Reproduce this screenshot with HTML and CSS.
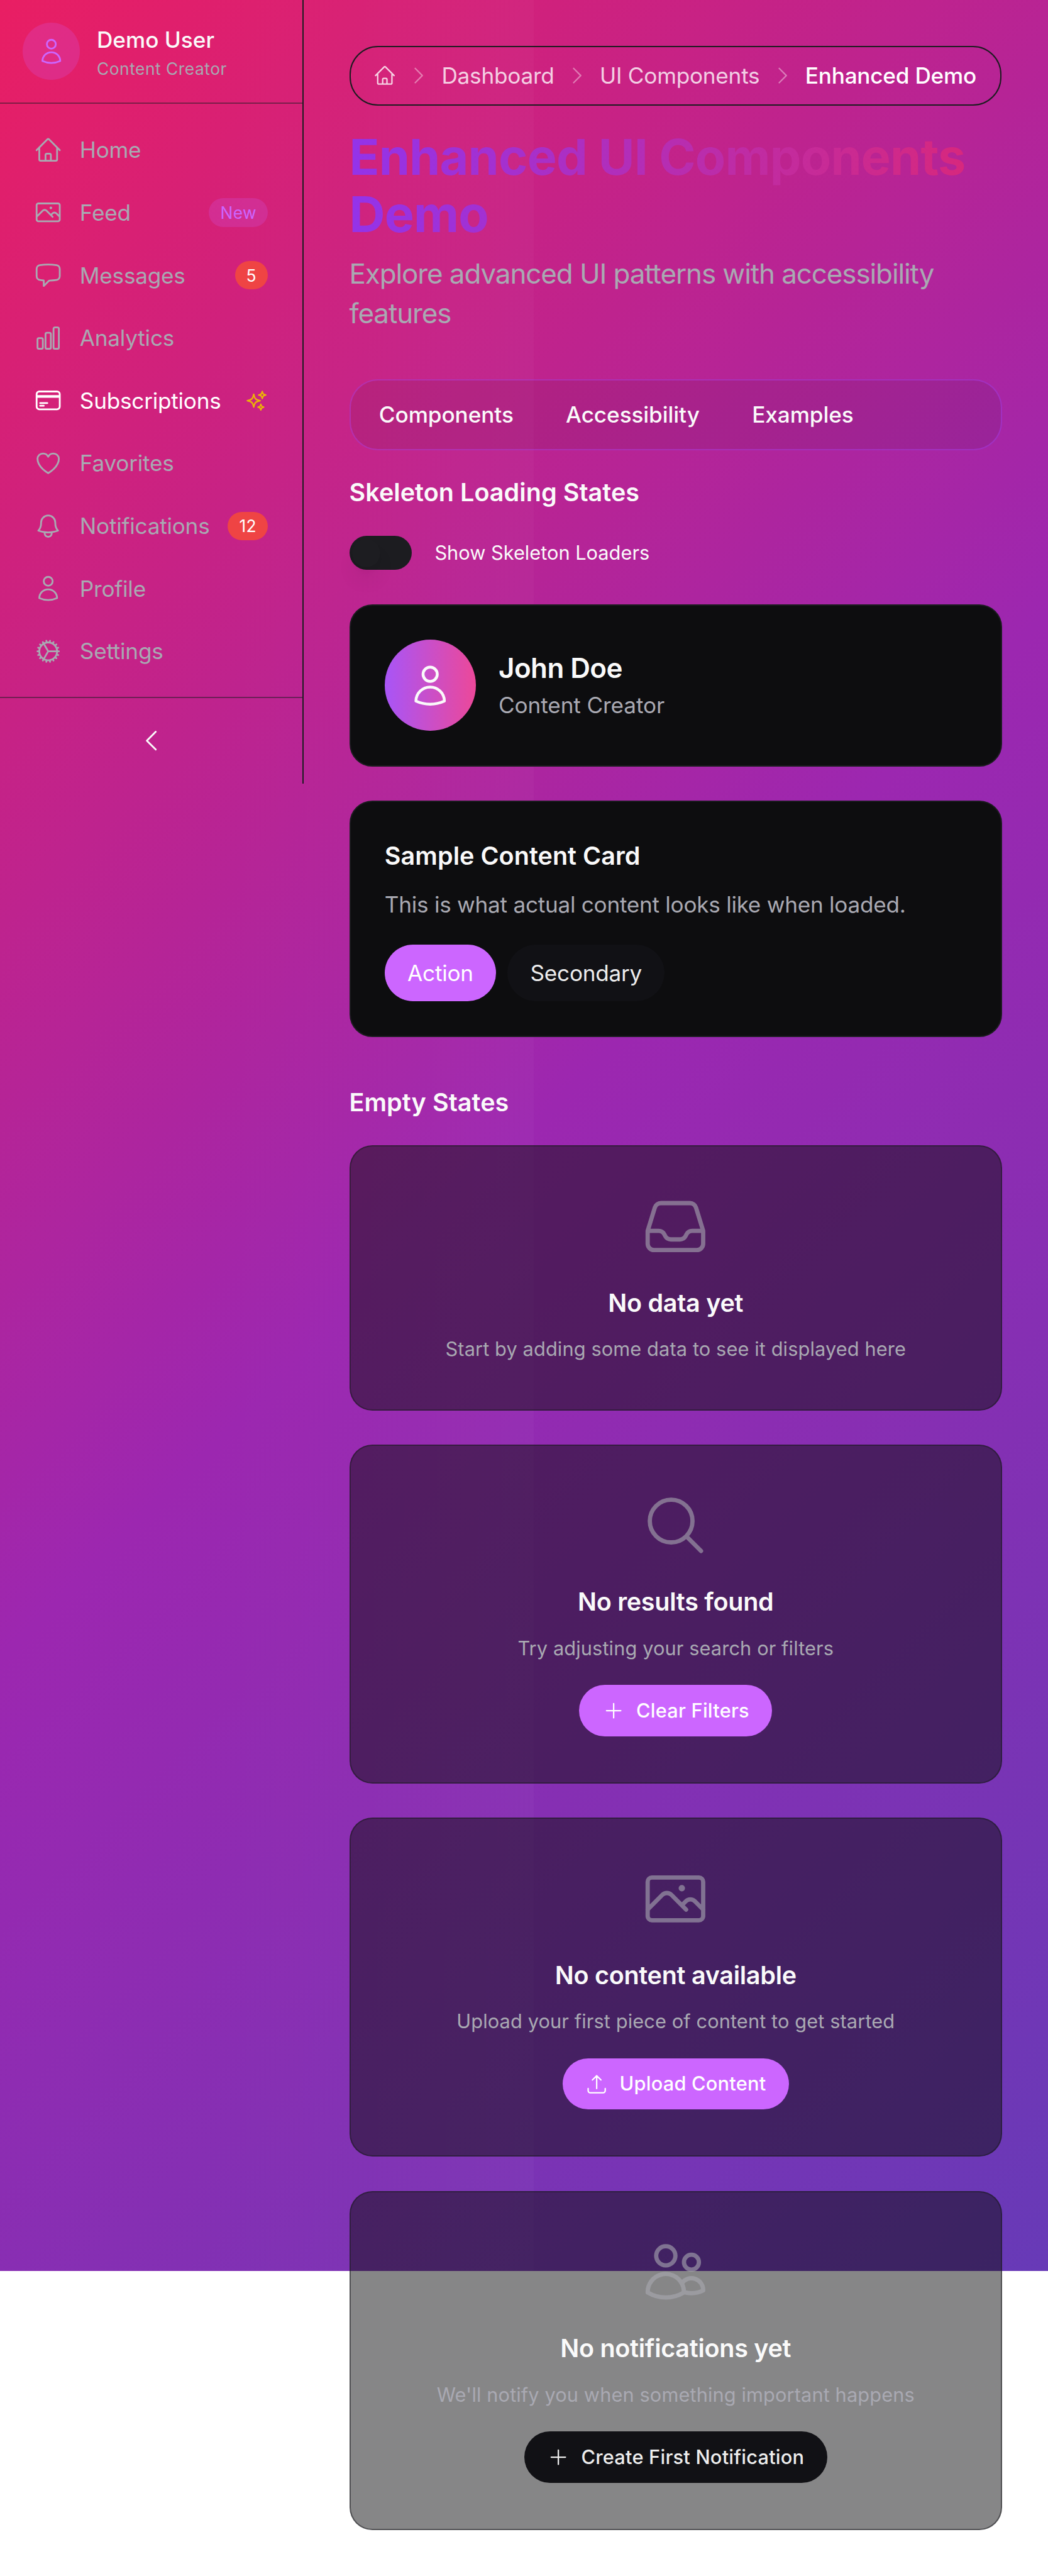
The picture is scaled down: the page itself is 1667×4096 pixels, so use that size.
FILE: index.html
```html
<!DOCTYPE html>
<html lang="en">
<head>
<meta charset="utf-8">
<title>Enhanced UI Components Demo</title>
<link rel="stylesheet" href="styles.css">
</head>
<body>
<svg class="sprite" aria-hidden="true">
  <symbol id="home" viewBox="0 0 24 24"><path d="m2.25 12 8.954-8.955c.44-.439 1.152-.439 1.591 0L21.75 12M4.5 9.75v10.125c0 .621.504 1.125 1.125 1.125H9.75v-4.875c0-.621.504-1.125 1.125-1.125h2.25c.621 0 1.125.504 1.125 1.125V21h4.125c.621 0 1.125-.504 1.125-1.125V9.75M8.25 21h8.25"/></symbol>
  <symbol id="photo" viewBox="0 0 24 24"><path d="m2.25 15.75 5.159-5.159a2.25 2.25 0 0 1 3.182 0l5.159 5.159m-1.5-1.5 1.409-1.409a2.25 2.25 0 0 1 3.182 0l2.909 2.909m-18 3.75h16.5a1.5 1.5 0 0 0 1.5-1.5V6a1.5 1.5 0 0 0-1.5-1.5H3.75A1.5 1.5 0 0 0 2.25 6v12a1.5 1.5 0 0 0 1.5 1.5Zm10.5-11.25h.008v.008h-.008V8.25Zm.375 0a.375.375 0 1 1-.75 0 .375.375 0 0 1 .75 0Z"/></symbol>
  <symbol id="chat" viewBox="0 0 24 24"><path d="M2.25 12.76c0 1.6 1.123 2.994 2.707 3.227 1.087.16 2.185.283 3.293.369V21l4.076-4.076a1.526 1.526 0 0 1 1.037-.443 48.282 48.282 0 0 0 5.68-.494c1.584-.233 2.707-1.626 2.707-3.228V6.741c0-1.602-1.123-2.995-2.707-3.228A48.394 48.394 0 0 0 12 3c-2.392 0-4.744.175-7.043.513C3.373 3.746 2.25 5.14 2.25 6.741v6.018Z"/></symbol>
  <symbol id="chart" viewBox="0 0 24 24"><path d="M3 13.125C3 12.504 3.504 12 4.125 12h2.25c.621 0 1.125.504 1.125 1.125v6.75C7.5 20.496 6.996 21 6.375 21h-2.25A1.125 1.125 0 0 1 3 19.875v-6.75ZM9.75 8.625c0-.621.504-1.125 1.125-1.125h2.25c.621 0 1.125.504 1.125 1.125v11.25c0 .621-.504 1.125-1.125 1.125h-2.25a1.125 1.125 0 0 1-1.125-1.125V8.625ZM16.5 4.125c0-.621.504-1.125 1.125-1.125h2.25C20.496 3 21 3.504 21 4.125v15.75c0 .621-.504 1.125-1.125 1.125h-2.25a1.125 1.125 0 0 1-1.125-1.125V4.125Z"/></symbol>
  <symbol id="card" viewBox="0 0 24 24"><path d="M2.25 8.25h19.5M2.25 9h19.5m-16.5 5.25h6m-6 2.25h3m-3.75 3h15a2.25 2.25 0 0 0 2.25-2.25V6.75A2.25 2.25 0 0 0 19.5 4.5h-15a2.25 2.25 0 0 0-2.25 2.25v10.5A2.25 2.25 0 0 0 4.5 19.5Z"/></symbol>
  <symbol id="sparkles" viewBox="0 0 24 24"><path d="M9.813 15.904 9 18.75l-.813-2.846a4.5 4.5 0 0 0-3.09-3.09L2.25 12l2.846-.813a4.5 4.5 0 0 0 3.09-3.09L9 5.25l.813 2.846a4.5 4.5 0 0 0 3.09 3.09L15.75 12l-2.846.813a4.5 4.5 0 0 0-3.09 3.09ZM18.259 8.715 18 9.75l-.259-1.035a3.375 3.375 0 0 0-2.455-2.456L14.25 6l1.036-.259a3.375 3.375 0 0 0 2.455-2.456L18 2.25l.259 1.035a3.375 3.375 0 0 0 2.456 2.456L21.75 6l-1.035.259a3.375 3.375 0 0 0-2.456 2.456ZM16.894 20.567 16.5 21.75l-.394-1.183a2.25 2.25 0 0 0-1.423-1.423L13.5 18.75l1.183-.394a2.25 2.25 0 0 0 1.423-1.423l.394-1.183.394 1.183a2.25 2.25 0 0 0 1.423 1.423l1.183.394-1.183.394a2.25 2.25 0 0 0-1.423 1.423Z"/></symbol>
  <symbol id="heart" viewBox="0 0 24 24"><path d="M21 8.25c0-2.485-2.099-4.5-4.688-4.5-1.935 0-3.597 1.126-4.312 2.733-.715-1.607-2.377-2.733-4.313-2.733C5.1 3.75 3 5.765 3 8.25c0 7.22 9 12 9 12s9-4.78 9-12Z"/></symbol>
  <symbol id="bell" viewBox="0 0 24 24"><path d="M14.857 17.082a23.848 23.848 0 0 0 5.454-1.31A8.967 8.967 0 0 1 18 9.75V9A6 6 0 0 0 6 9v.75a8.967 8.967 0 0 1-2.312 6.022c1.733.64 3.56 1.085 5.455 1.31m5.714 0a24.255 24.255 0 0 1-5.714 0m5.714 0a3 3 0 1 1-5.714 0"/></symbol>
  <symbol id="user" viewBox="0 0 24 24"><path d="M15.75 6a3.75 3.75 0 1 1-7.5 0 3.75 3.75 0 0 1 7.5 0ZM4.501 20.118a7.5 7.5 0 0 1 14.998 0A17.933 17.933 0 0 1 12 21.75c-2.676 0-5.216-.584-7.499-1.632Z"/></symbol>
  <symbol id="cog" viewBox="0 0 24 24"><path d="M4.5 12a7.5 7.5 0 0 0 15 0m-15 0a7.5 7.5 0 1 1 15 0m-15 0H3m16.5 0H21m-1.5 0H12m-8.457 3.077 1.41-.513m14.095-5.13 1.41-.513M5.106 17.785l1.15-.964m11.49-9.642 1.149-.964M7.501 19.795l.75-1.3m7.5-12.99.75-1.3m-6.063 16.658.26-1.477m2.605-14.772.26-1.477m0 17.726-.26-1.477M10.698 4.614l-.26-1.477M16.5 19.794l-.75-1.299M7.5 4.205 12 12m6.894 5.785-1.149-.964M6.256 7.178l-1.15-.964m15.352 8.864-1.41-.513M4.954 9.435l-1.41-.514M12.002 12l-3.75 6.495"/></symbol>
  <symbol id="left" viewBox="0 0 24 24"><path d="M15.75 19.5 8.25 12l7.5-7.5"/></symbol>
  <symbol id="right" viewBox="0 0 24 24"><path d="m8.25 4.5 7.5 7.5-7.5 7.5"/></symbol>
  <symbol id="inbox" viewBox="0 0 24 24"><path d="M2.25 13.5h3.86a2.25 2.25 0 0 1 2.012 1.244l.256.512a2.25 2.25 0 0 0 2.013 1.244h3.218a2.25 2.25 0 0 0 2.013-1.244l.256-.512a2.25 2.25 0 0 1 2.013-1.244h3.859m-19.5.338V18a2.25 2.25 0 0 0 2.25 2.25h15A2.25 2.25 0 0 0 21.75 18v-4.162c0-.224-.034-.447-.1-.661L19.24 5.338a2.25 2.25 0 0 0-2.15-1.588H6.911a2.25 2.25 0 0 0-2.15 1.588L2.35 13.177a2.25 2.25 0 0 0-.1.661Z"/></symbol>
  <symbol id="search" viewBox="0 0 24 24"><path d="m21 21-5.197-5.197m0 0A7.5 7.5 0 1 0 5.196 5.196a7.5 7.5 0 0 0 10.607 10.607Z"/></symbol>
  <symbol id="plus" viewBox="0 0 24 24"><path d="M12 4.5v15m7.5-7.5h-15"/></symbol>
  <symbol id="upload" viewBox="0 0 24 24"><path d="M3 16.5v2.25A2.25 2.25 0 0 0 5.25 21h13.5A2.25 2.25 0 0 0 21 18.75V16.5m-13.5-9L12 3m0 0 4.5 4.5M12 3v13.5"/></symbol>
  <symbol id="users" viewBox="0 0 24 24"><path d="M15 19.128a9.38 9.38 0 0 0 2.625.372 9.337 9.337 0 0 0 4.121-.952 4.125 4.125 0 0 0-7.533-2.493M15 19.128v-.003c0-1.113-.285-2.16-.786-3.07M15 19.128v.106A12.318 12.318 0 0 1 8.624 21c-2.331 0-4.512-.645-6.374-1.766l-.001-.109a6.375 6.375 0 0 1 11.964-3.07M12 6.375a3.375 3.375 0 1 1-6.75 0 3.375 3.375 0 0 1 6.75 0Zm8.25 2.25a2.625 2.625 0 1 1-5.25 0 2.625 2.625 0 0 1 5.25 0Z"/></symbol>
</svg>
<div class="page">
  <aside class="sidebar">
    <div class="account">
      <span class="account-avatar"><svg class="icon icon-md"><use href="#user"/></svg></span>
      <div>
        <p class="account-name">Demo User</p>
        <p class="account-role">Content Creator</p>
      </div>
    </div>
    <nav class="menu">
      <a class="menu-item"><svg class="icon"><use href="#home"/></svg><span>Home</span></a>
      <a class="menu-item"><svg class="icon"><use href="#photo"/></svg><span>Feed</span><em class="pill pill-new">New</em></a>
      <a class="menu-item"><svg class="icon"><use href="#chat"/></svg><span>Messages</span><em class="pill">5</em></a>
      <a class="menu-item"><svg class="icon"><use href="#chart"/></svg><span>Analytics</span></a>
      <a class="menu-item current"><svg class="icon"><use href="#card"/></svg><span>Subscriptions</span><svg class="icon icon-sm sparkle"><use href="#sparkles"/></svg></a>
      <a class="menu-item"><svg class="icon"><use href="#heart"/></svg><span>Favorites</span></a>
      <a class="menu-item"><svg class="icon"><use href="#bell"/></svg><span>Notifications</span><em class="pill">12</em></a>
      <a class="menu-item"><svg class="icon"><use href="#user"/></svg><span>Profile</span></a>
      <a class="menu-item"><svg class="icon"><use href="#cog"/></svg><span>Settings</span></a>
    </nav>
    <div class="collapse"><svg class="icon"><use href="#left"/></svg></div>
  </aside>
  <main class="main">
    <nav class="crumbs">
      <svg class="icon icon-sm"><use href="#home"/></svg>
      <svg class="icon icon-sm sep"><use href="#right"/></svg>
      <span>Dashboard</span>
      <svg class="icon icon-sm sep"><use href="#right"/></svg>
      <span>UI Components</span>
      <svg class="icon icon-sm sep"><use href="#right"/></svg>
      <span class="here">Enhanced Demo</span>
    </nav>
    <h1 class="title">Enhanced UI Components Demo</h1>
    <p class="lead">Explore advanced UI patterns with accessibility<br>features</p>
    <div class="tabs"><span>Components</span><span>Accessibility</span><span>Examples</span></div>

    <h2 class="heading">Skeleton Loading States</h2>
    <div class="switch-row"><span class="switch"><i class="knob"></i></span><span class="switch-label">Show Skeleton Loaders</span></div>
    <section class="card profile">
      <span class="avatar"><svg class="icon icon-lg"><use href="#user"/></svg></span>
      <div><h3 class="profile-name">John Doe</h3><p class="profile-role">Content Creator</p></div>
    </section>
    <section class="card sample">
      <h3 class="sample-title">Sample Content Card</h3>
      <p class="sample-text">This is what actual content looks like when loaded.</p>
      <div class="actions"><button class="button">Action</button><button class="button secondary">Secondary</button></div>
    </section>

    <h2 class="heading heading-empty">Empty States</h2>
    <section class="card empty">
      <svg class="icon icon-xl"><use href="#inbox"/></svg>
      <h3 class="empty-title">No data yet</h3>
      <p class="empty-text">Start by adding some data to see it displayed here</p>
    </section>
    <section class="card empty">
      <svg class="icon icon-xl"><use href="#search"/></svg>
      <h3 class="empty-title">No results found</h3>
      <p class="empty-text">Try adjusting your search or filters</p>
      <button class="button small"><svg class="icon icon-sm"><use href="#plus"/></svg><span>Clear Filters</span></button>
    </section>
    <section class="card empty">
      <svg class="icon icon-xl"><use href="#photo"/></svg>
      <h3 class="empty-title">No content available</h3>
      <p class="empty-text">Upload your first piece of content to get started</p>
      <button class="button small"><svg class="icon icon-sm"><use href="#upload"/></svg><span>Upload Content</span></button>
    </section>
    <section class="card empty">
      <svg class="icon icon-xl"><use href="#users"/></svg>
      <h3 class="empty-title">No notifications yet</h3>
      <p class="empty-text">We'll notify you when something important happens</p>
      <button class="button small secondary"><svg class="icon icon-sm"><use href="#plus"/></svg><span>Create First Notification</span></button>
    </section>
  </main>
</div>
</body>
</html>
```
FILE: styles.css
```css
:root {
  --ink: #0d0d0f;
  --line: #1c1c20;
  --muted: #a9a9b2;
  --accent: #cc66ff;
}
* { box-sizing: border-box; margin: 0; padding: 0; }
html { font-size: 36.239px; background: #fff; }
body { font-family: Inter, "Liberation Sans", sans-serif; font-size: .97rem; line-height: 1.5rem; letter-spacing: -.0065em; color: #fafafa; }
.sprite { position: absolute; width: 0; height: 0; }
.page {
  display: flex;
  align-items: flex-start;
  height: 4096px;
  background:
    linear-gradient(to right, rgba(255, 255, 255, 0) 40%, rgba(255, 255, 255, .025)) 0 0 / 849px 3611px no-repeat,
    linear-gradient(135deg, #e91e63 0%, #9c27b0 50%, #673ab7 100%) 0 0 / 100% 3611px no-repeat;
}
.icon { width: 1.25rem; height: 1.25rem; flex: none; display: block; fill: none; stroke: currentColor; stroke-width: 1.5; stroke-linecap: round; stroke-linejoin: round; }
.icon-sm { width: 1rem; height: 1rem; }
.icon-md { width: 1.25rem; height: 1.25rem; }
.icon-lg { width: 2rem; height: 2rem; }
.icon-xl { width: 3rem; height: 3rem; }

.sidebar { width: 482.5px; height: 1245.5px; flex: none; display: flex; flex-direction: column; border-right: 2px solid var(--line); }
.account { display: flex; align-items: center; gap: .75rem; padding: 1rem; border-bottom: 2px solid rgba(28, 28, 32, .5); height: 4.56rem; flex: none; }
.account-avatar { width: 2.5rem; height: 2.5rem; border-radius: 50%; display: grid; place-items: center; background: rgba(204, 102, 255, .2); color: var(--accent); }
.account-name { font-weight: 500; line-height: 1.5rem; letter-spacing: 0; }
.account-role { font-size: .728rem; line-height: 1rem; letter-spacing: .019em; color: var(--muted); }
.menu { flex: 1; padding: .77rem .5rem .73rem; display: flex; flex-direction: column; gap: .25rem; }
.menu-item { display: flex; align-items: center; gap: .75rem; height: 2.5rem; padding: 0 1rem; color: var(--muted); }
.menu-item.current { color: #fff; }
.pill { margin-left: auto; font-style: normal; font-size: .728rem; line-height: 1rem; letter-spacing: .015em; padding: .125rem .5rem; border-radius: 99px; background: #ef4444; color: #fff; }
.pill-new { background: rgba(204, 102, 255, .2); color: var(--accent); }
.sparkle { margin-left: auto; color: #eab308; }
.collapse { display: flex; align-items: center; justify-content: center; height: 3.79rem; flex: none; border-top: 2px solid rgba(28, 28, 32, .5); }

.main { width: 1038.5px; margin: 73px 0 0 73px; }
.crumbs { display: flex; align-items: center; gap: .5rem; width: 1037px; height: 2.625rem; padding: 0 1rem; border: 2px solid var(--line); border-radius: 1.25rem; color: rgba(255, 255, 255, .8); white-space: nowrap; }
.crumbs .sep { color: rgba(255, 255, 255, .4); }
.crumbs .here { color: #fff; font-weight: 500; }
.title { margin-top: 1rem; font-size: 2.18rem; line-height: 2.5rem; font-weight: 700; letter-spacing: -.01em; color: transparent; background: linear-gradient(to right, #9333ea, #db2777); -webkit-background-clip: text; background-clip: text; }
.lead { margin-top: .5rem; font-size: 1.2125rem; line-height: 1.75rem; letter-spacing: -.0246em; color: var(--muted); }
.tabs { display: flex; gap: .3rem; margin-top: 2rem; height: 3.125rem; padding: .25rem; border: 2px solid rgba(150, 70, 240, .36); border-radius: 1.25rem; background: rgba(13, 13, 15, .08); background-clip: padding-box; font-weight: 500; letter-spacing: -.002em; }
.tabs span { padding: .5rem 1rem; }
.heading { margin-top: 1rem; font-size: 1.091rem; line-height: 1.75rem; font-weight: 600; letter-spacing: .001em; }
.switch-row { display: flex; align-items: center; gap: 1rem; height: 1.5rem; margin-top: 1rem; }
.switch { width: 2.75rem; height: 1.5rem; padding: .125rem; border-radius: 1rem; background: var(--line); }
.knob { display: block; width: 1.25rem; height: 1.25rem; border-radius: 50%; background: #1d1d21; box-shadow: 0 .625rem .94rem -.19rem rgba(0, 0, 0, .1), 0 .25rem .375rem -.25rem rgba(0, 0, 0, .1); }
.switch-label { font-size: .849rem; letter-spacing: 0; }

.card { margin-top: 1.5rem; padding: 1.5rem; border: 2px solid var(--line); border-radius: 1rem; background: var(--ink); }
.profile { display: flex; align-items: center; gap: 1rem; height: 7.125rem; }
.avatar { width: 4rem; height: 4rem; border-radius: 50%; display: grid; place-items: center; background: linear-gradient(to right, #a855f7, #ec4899); }
.profile-name { font-size: 1.2125rem; line-height: 1.75rem; font-weight: 600; letter-spacing: -.013em; }
.profile-role, .sample-text { color: var(--muted); }
.profile-role { letter-spacing: -.003em; }
.sample { height: 10.375rem; }
.sample-title { font-size: 1.091rem; line-height: 1.75rem; font-weight: 600; letter-spacing: .001em; }
.sample-text { margin-top: .5rem; letter-spacing: -.0075em; white-space: nowrap; }
.actions { display: flex; gap: .5rem; margin-top: 1rem; }
.button { display: inline-flex; align-items: center; justify-content: center; gap: .5rem; height: 2.5rem; padding: 0 1rem; border: 0; border-radius: 1.25rem; background: var(--accent); color: #fff; font: inherit; letter-spacing: inherit; white-space: nowrap; }
.button.small { height: 2.25rem; margin-top: 1rem; font-size: .849rem; font-weight: 500; letter-spacing: .007em; }
.button.secondary { background: #111115; color: #ededed; }

.heading-empty { margin-top: 2rem; }
.heading-empty + .card { margin-top: 1rem; }
.empty { display: flex; flex-direction: column; align-items: center; height: 14.875rem; padding: 2rem; text-align: center; background: rgba(13, 13, 15, .5); border-color: rgba(28, 28, 32, .5); }
.heading-empty + .empty { height: 11.625rem; }
.empty > .icon-xl { color: var(--muted); opacity: .6; }
.empty-title { margin-top: 1rem; font-size: 1.091rem; line-height: 1.75rem; font-weight: 600; letter-spacing: -.007em; }
.empty-text { margin-top: .5rem; font-size: .849rem; line-height: 1.25rem; letter-spacing: .0035em; color: var(--muted); white-space: nowrap; }
```
